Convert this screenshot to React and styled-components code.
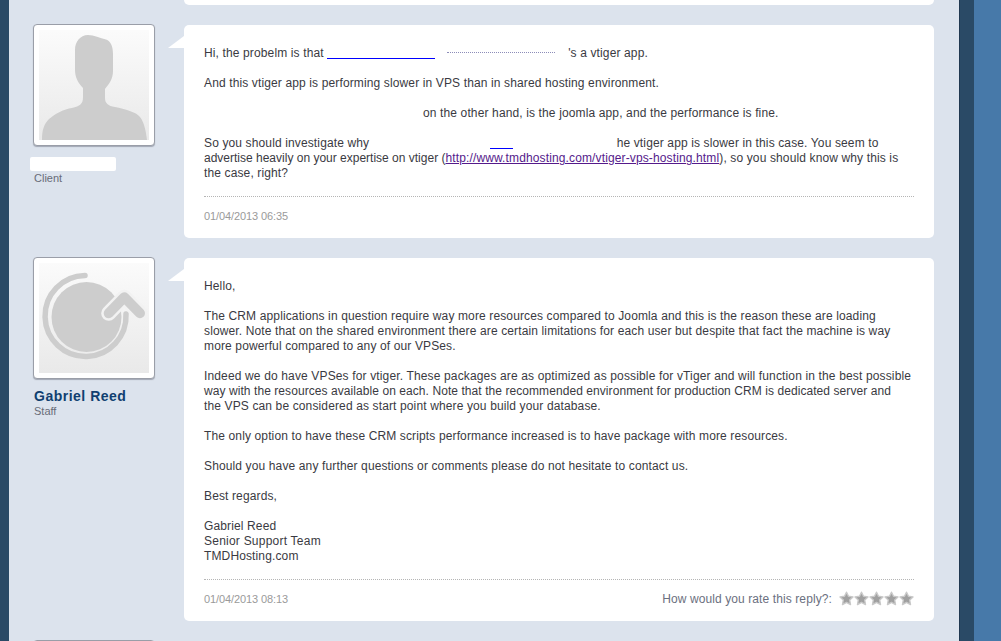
import React from "react";
import styled, { createGlobalStyle } from "styled-components";

const Global = createGlobalStyle`
  html, body {
    margin: 0;
    height: 100%;
    overflow: hidden;
    background: #4779a9;
    font-family: "Liberation Sans", Arial, sans-serif;
  }
`;

const Page = styled.div`
  display: flex;
  height: 641px;
  overflow: hidden;
`;

const EdgeLeft = styled.div`
  width: 9px;
  background: #2a4a66;
`;

const Content = styled.div`
  width: 950px;
  background: #dce3ed;
  padding-left: 24px;
  padding-right: 25px;
  box-sizing: border-box;
  overflow: hidden;
`;

const EdgeRight = styled.div`
  width: 15px;
  background: #2a4a66;
  border-left: 1px solid #1f3850;
  box-sizing: border-box;
`;

const Stub = styled.div`
  height: 5px;
  margin-left: 151px;
  background: #fff;
  border-radius: 0 0 5px 5px;
`;

const Reply = styled.div`
  display: flex;
  margin-top: 20px;
`;

const Side = styled.div`
  width: 151px;
  flex-shrink: 0;
  margin-top: -1px;
`;

const Avatar = styled.div`
  width: 122px;
  height: 122px;
  box-sizing: border-box;
  padding: 5px;
  background: #fff;
  border: 1px solid #9a9ea8;
  border-radius: 4px;
  box-shadow: 0 1px 1px rgba(90, 95, 110, 0.45);
  svg {
    display: block;
    width: 110px;
    height: 110px;
  }
`;

const Name = styled.div`
  margin: 9px 0 0 1px;
  height: 16px;
  line-height: 16px;
  font-size: 14px;
  font-weight: bold;
  letter-spacing: 0.5px;
  color: #103f70;
`;

const Hidden = styled.div`
  margin: 11px 0 0 -3px;
  width: 86px;
  height: 14px;
  background: #fff;
  border-radius: 2px;
`;

const Role = styled.div`
  margin: 1px 0 0 1px;
  height: 12px;
  line-height: 12px;
  font-size: 11px;
  color: #686c78;
`;

const Card = styled.div`
  position: relative;
  flex: 1;
  background: #fff;
  border-radius: 5px;
  padding: 21px 20px 5px;
  &::before {
    content: "";
    position: absolute;
    left: -16px;
    top: 11px;
    width: 16px;
    height: 12px;
    background: #fff;
    clip-path: polygon(100% 0, 100% 100%, 0 100%);
  }
`;

const Body = styled.div`
  font-size: 12px;
  line-height: 15px;
  letter-spacing: 0.13px;
  white-space: nowrap;
  color: #3a3a42;
  p {
    margin: 0 0 15px;
  }
  p:last-child {
    margin: 0;
  }
  a {
    color: #551a8b;
    text-decoration: underline;
  }
`;

/* a few lines run wider or narrower than the rest in the original */
const Spaced = styled.span`
  letter-spacing: ${(p) => p.$ls}px;
`;

const Blank = styled.span`
  display: inline-block;
  width: ${(p) => p.$w}px;
  height: 13px;
  vertical-align: top;
  box-sizing: border-box;
  border-bottom: ${(p) => (p.$line ? "1px solid #0000ff" : "none")};
`;

const Residue = styled.span`
  display: inline-block;
  width: 108px;
  height: 6px;
  margin: 0 13px 0 12px;
  vertical-align: top;
  border-bottom: 1px dotted #8c8cb8;
`;

const Foot = styled.div`
  display: flex;
  align-items: center;
  justify-content: space-between;
  margin-top: 15px;
  border-top: 1px dotted #b5b5b5;
  height: 37px;
  padding-top: 1px;
  box-sizing: border-box;
`;

const Stamp = styled.span`
  font-size: 11px;
  letter-spacing: -0.1px;
  color: #9a9a9a;
`;

const Rate = styled.div`
  display: flex;
  align-items: center;
  font-size: 12px;
  letter-spacing: 0.1px;
  color: #6b7080;
`;

const Stars = styled.div`
  display: flex;
  margin-left: 7px;
  svg {
    display: block;
    width: 15px;
    height: 15px;
  }
`;

const Star = () => (
  <svg viewBox="0 0 15 15">
    <path
      d="M7.5 1.2 9.5 5.3 14 5.9 10.7 9 11.5 13.6 7.5 11.4 3.5 13.6 4.3 9 1 5.9 5.5 5.3Z"
      fill="#a0a0a0"
      stroke="#c9c9c9"
      strokeWidth="1.4"
      strokeLinejoin="round"
    />
  </svg>
);

const Person = () => (
  <svg viewBox="0 0 110 110">
    <defs>
      <linearGradient id="personBg" x1="0" y1="0" x2="0" y2="1">
        <stop offset="0" stopColor="#fbfbfb" />
        <stop offset="1" stopColor="#e9e9e9" />
      </linearGradient>
    </defs>
    <rect width="110" height="110" fill="url(#personBg)" />
    <path
      d="M49 5C55 5 61 8 67 9.5C72 11 74 17 74 24L74 41C74 49 70 54 66 59L66 68C66 73 69 76 76 77C86 79 97 82 101 87C105 92 107 101 108 110L3 110C3 100 5 94 10 89C16 84 25 79 33 78C41 76 44 74 44 67L44 58C39 53 36 47 36 40L36 20C36 12 41 5 49 5Z"
      fill="#cdcdcd"
    />
  </svg>
);

const Logo = () => (
  <svg viewBox="0 0 110 110">
    <defs>
      <linearGradient id="logoBg" x1="0" y1="0" x2="0" y2="1">
        <stop offset="0" stopColor="#fbfbfb" />
        <stop offset="1" stopColor="#e9e9e9" />
      </linearGradient>
    </defs>
    <rect width="110" height="110" fill="url(#logoBg)" />
    <path
      d="M46 12.5A40.5 40.5 0 1 0 87 51"
      fill="none"
      stroke="#cdcdcd"
      strokeWidth="5.5"
      strokeLinecap="round"
    />
    <circle cx="47.5" cy="54" r="35" fill="#cdcdcd" />
    <path d="M69.7 50.3 85.3 34.3 101 50.3" fill="none" stroke="#f2f2f2" strokeWidth="15" strokeLinecap="round" strokeLinejoin="round" />
    <path d="M69.7 50.3 85.3 34.3 101 50.3" fill="none" stroke="#cdcdcd" strokeWidth="10" strokeLinecap="round" strokeLinejoin="round" />
  </svg>
);

export default function App() {
  return (
    <Page>
      <Global />
      <EdgeLeft />
      <Content>
        <Stub />
        <Reply>
          <Side>
            <Avatar>
              <Person />
            </Avatar>
            <Hidden />
            <Role>Client</Role>
          </Side>
          <Card>
            <Body>
              <p>
                Hi, the probelm is that <Blank $w={108} $line />
                <Residue />'s a vtiger app.
              </p>
              <p>And this vtiger app is performing slower in VPS than in shared hosting environment.</p>
              <p>
                <Blank $w={219} />
                on the other hand, is the joomla app, and the performance is fine.
              </p>
              <p>
                So you should investigate why <Blank $w={117} />
                <Blank $w={23} $line />
                <Blank $w={104} />
                he vtiger app is slower in this case. You seem to
                <br />
                <Spaced $ls={0}>advertise heavily on your expertise on vtiger (</Spaced>
                <a href="#tmd">http://www.tmdhosting.com/vtiger-vps-hosting.html</a>), so you should know why this is
                <br />
                the case, right?
              </p>
            </Body>
            <Foot>
              <Stamp>01/04/2013 06:35</Stamp>
            </Foot>
          </Card>
        </Reply>
        <Reply>
          <Side>
            <Avatar>
              <Logo />
            </Avatar>
            <Name>Gabriel Reed</Name>
            <Role>Staff</Role>
          </Side>
          <Card>
            <Body>
              <p>Hello,</p>
              <p>
                The CRM applications in question require way more resources compared to Joomla and this is the reason these are loading
                <br />
                slower. Note that on the shared environment there are certain limitations for each user but despite that fact the machine is way
                <br />
                more powerful compared to any of our VPSes.
              </p>
              <p>
                <Spaced $ls={0.145}>
                  Indeed we do have VPSes for vtiger. These packages are as optimized as possible for vTiger and will function in the best possible
                </Spaced>
                <br />
                <Spaced $ls={0.07}>
                  way with the resources available on each. Note that the recommended environment for production CRM is dedicated server and
                </Spaced>
                <br />
                the VPS can be considered as start point where you build your database.
              </p>
              <p>The only option to have these CRM scripts performance increased is to have package with more resources.</p>
              <p>Should you have any further questions or comments please do not hesitate to contact us.</p>
              <p>Best regards,</p>
              <p>
                Gabriel Reed
                <br />
                <Spaced $ls={0.23}>Senior Support Team</Spaced>
                <br />
                TMDHosting.com
              </p>
            </Body>
            <Foot>
              <Stamp>01/04/2013 08:13</Stamp>
              <Rate>
                How would you rate this reply?:
                <Stars>
                  <Star />
                  <Star />
                  <Star />
                  <Star />
                  <Star />
                </Stars>
              </Rate>
            </Foot>
          </Card>
        </Reply>
        <Reply>
          <Side>
            <Avatar />
          </Side>
          <Card />
        </Reply>
      </Content>
      <EdgeRight />
    </Page>
  );
}
